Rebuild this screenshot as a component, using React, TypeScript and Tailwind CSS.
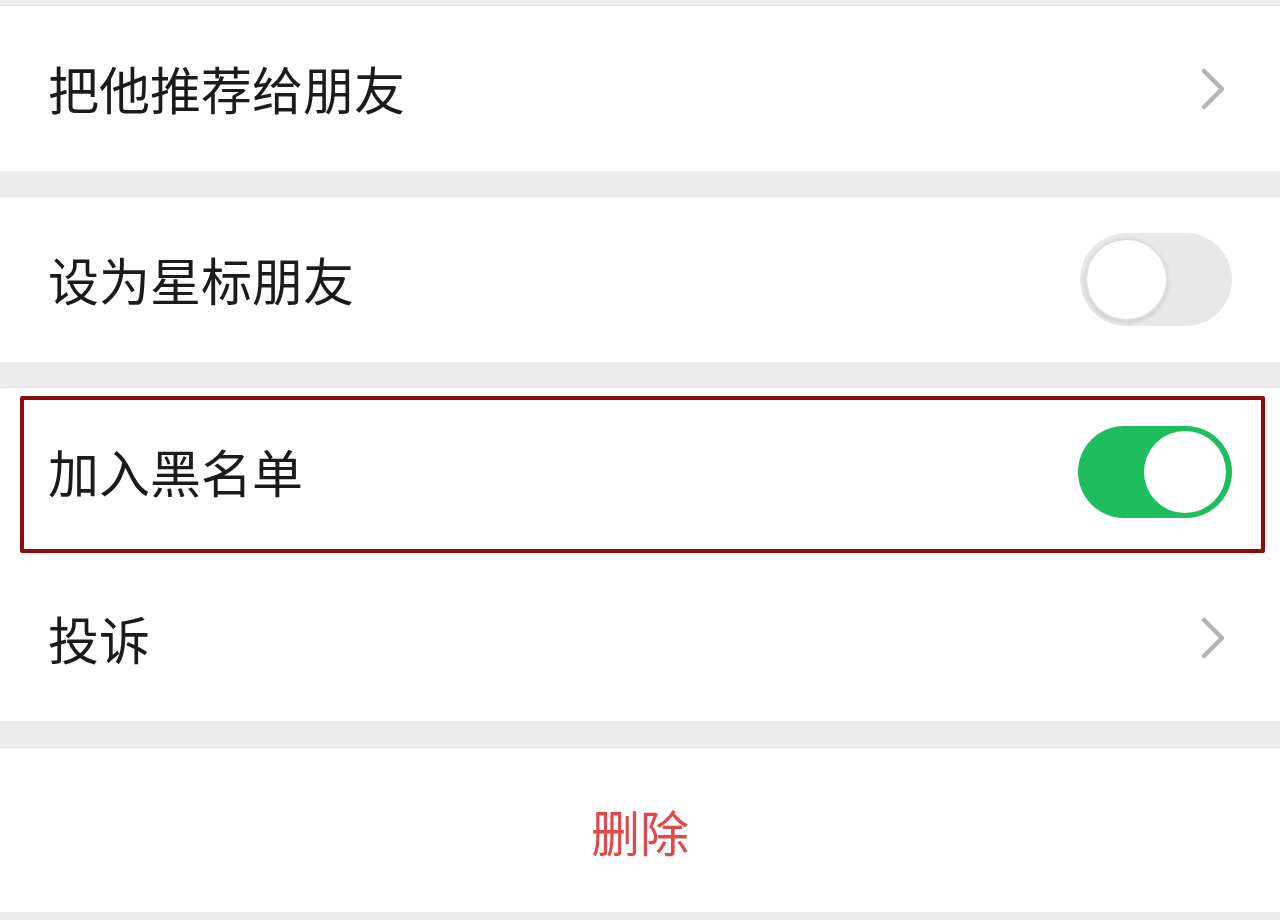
import React from "react";

const font = {
  fontFamily: '"Noto Sans CJK SC", "Noto Sans", sans-serif',
};

function Chevron() {
  return (
    <svg width="28" height="46" viewBox="0 0 28 46" className="shrink-0">
      <polyline
        points="5,5 23,23 5,41"
        fill="none"
        stroke="#b5b5b5"
        strokeWidth="4.5"
        strokeLinecap="round"
        strokeLinejoin="round"
      />
    </svg>
  );
}

function Toggle({ on }: { on: boolean }) {
  return on ?
      <div className="flex h-[92px] w-[154px] shrink-0 items-center justify-end rounded-full bg-[#1ebe5e] pr-[6px]">
        <div className="h-[82px] w-[82px] rounded-full bg-white" />
      </div>
    : <div className="flex h-[93px] w-[152px] shrink-0 items-center rounded-full bg-[#e8e8e8] pl-[5px]">
        <div className="h-[83px] w-[83px] rounded-full border-2 border-[#dedede] bg-white shadow-[0_2px_4px_rgba(0,0,0,0.12)]" />
      </div>;
}

function Row({
  label,
  height,
  right,
}: {
  label: string;
  height: string;
  right: React.ReactNode;
}) {
  return (
    <div className={`flex items-center justify-between bg-white pl-[48px] pr-[48px] ${height}`}>
      <span className="text-[51px] leading-none text-[#1b1b1b]">{label}</span>
      {right}
    </div>
  );
}

export default function App() {
  return (
    <div className="min-h-[920px] w-full bg-[#ececec]" style={font}>
      <div className="h-[6px] border-b border-[#e2e2e2]" />

      <div className="flex h-[165px] items-center justify-between bg-white pl-[48px] pr-[53px]">
        <span className="text-[51px] leading-none text-[#1b1b1b]">把他推荐给朋友</span>
        <Chevron />
      </div>

      <div className="h-[26px] border-b border-[#e2e2e2]" />

      <Row label="设为星标朋友" height="h-[165px]" right={<Toggle on={false} />} />

      <div className="h-[26px] border-b border-[#e2e2e2]" />

      {/* highlighted blacklist row */}
      <div className="relative">
        <Row label="加入黑名单" height="h-[167px]" right={<Toggle on />} />
        <div className="pointer-events-none absolute top-[8px] bottom-[2px] left-[20px] right-[15px] rounded-[2px] border-[4px] border-[#8e0b0e]" />
      </div>

      <div className="flex h-[166px] items-center justify-between bg-white pl-[48px] pr-[53px]">
        <span className="text-[51px] leading-none text-[#1b1b1b]">投诉</span>
        <Chevron />
      </div>

      <div className="h-[27px] border-b border-[#e2e2e2]" />

      <div className="flex h-[164px] items-center justify-center bg-white">
        <span className="text-[49px] leading-none text-[#e2474a]">删除</span>
      </div>
    </div>
  );
}
